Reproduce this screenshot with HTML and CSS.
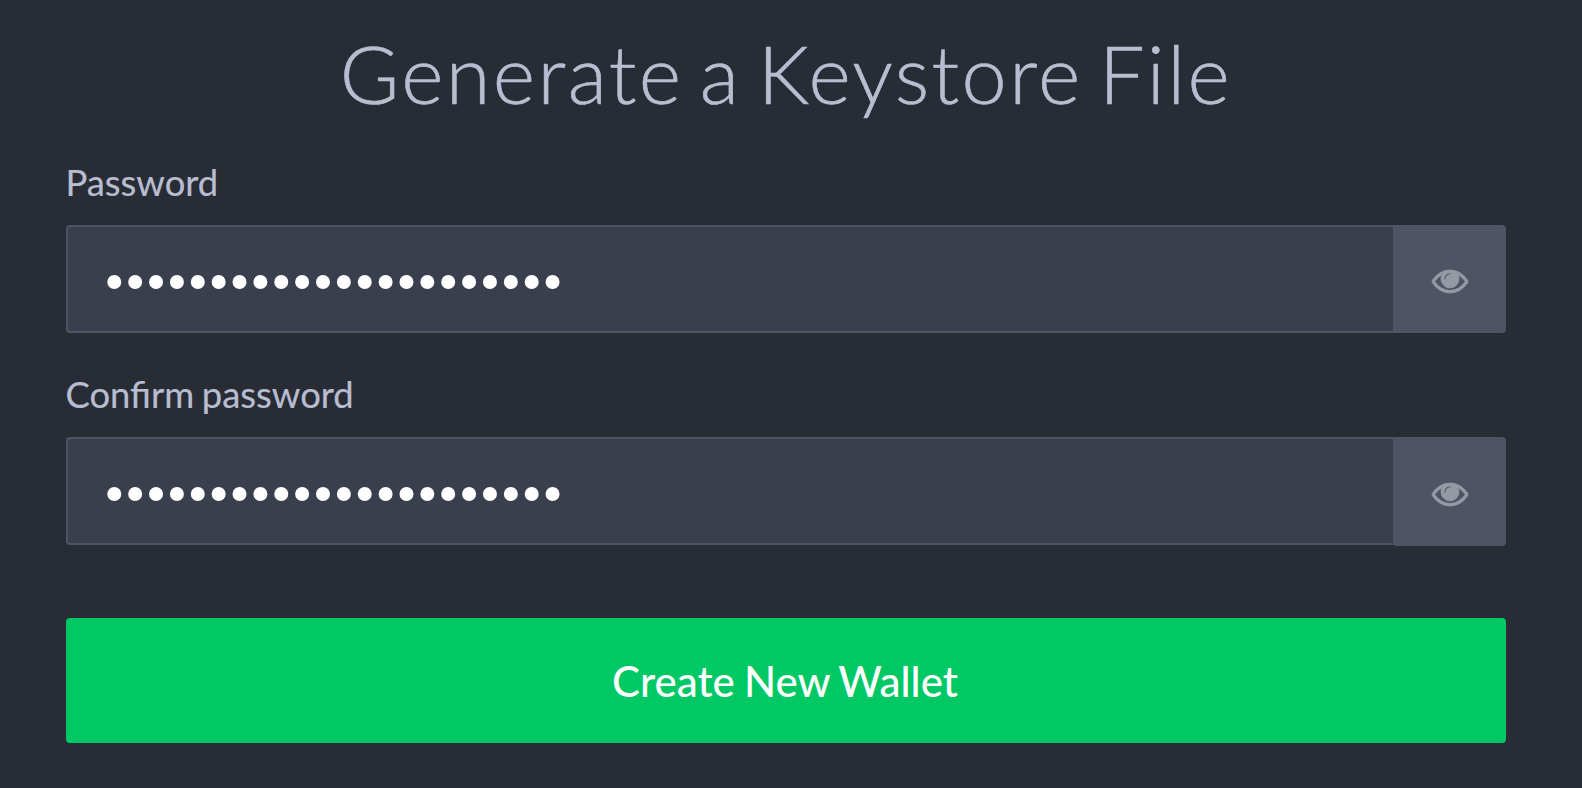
FILE: index.html
```
<!DOCTYPE html>
<html lang="en">
<head>
<meta charset="utf-8">
<title>Generate a Keystore File</title>
<link rel="stylesheet" href="styles.css">
</head>
<body>
<main class="panel">
  <h1 class="title">Generate a Keystore File</h1>
  <form class="form">
    <div class="field">
      <label class="label" for="pw">Password</label>
      <div class="group">
        <div class="input" id="pw"><svg class="dots" width="456" height="16" viewBox="0 0 456 16"><path d="M7.300 8H450"/></svg></div>
        <button type="button" class="toggle" aria-label="Show password"><svg class="eye" viewBox="0 0 1792 1152"><path d="M1664 576q-152-236-381-353 61 104 61 225 0 185-131.500 316.500t-316.500 131.500-316.500-131.500-131.500-316.500q0-121 61-225-229 117-381 353 133 205 333.500 326.500t434.500 121.500 434.500-121.500 333.500-326.500zm-720-384q0-20-14-34t-34-14q-125 0-214.500 89.500t-89.500 214.500q0 20 14 34t34 14 34-14 14-34q0-86 61-147t147-61q20 0 34-14t14-34zm848 384q0 34-20 69-140 230-376.500 368.500t-499.500 138.500-499.500-139-376.500-368q-20-35-20-69t20-69q140-229 376.500-368t499.500-139 499.500 139 376.500 368q20 35 20 69z"/></svg></button>
      </div>
    </div>
    <div class="field">
      <label class="label" for="pw2">Confirm password</label>
      <div class="group">
        <div class="input" id="pw2"><svg class="dots" width="456" height="16" viewBox="0 0 456 16"><path d="M7.300 8H450"/></svg></div>
        <button type="button" class="toggle toggle-tall" aria-label="Show password"><svg class="eye" viewBox="0 0 1792 1152"><path d="M1664 576q-152-236-381-353 61 104 61 225 0 185-131.500 316.500t-316.500 131.500-316.500-131.500-131.500-316.500q0-121 61-225-229 117-381 353 133 205 333.500 326.500t434.500 121.500 434.500-121.500 333.500-326.500zm-720-384q0-20-14-34t-34-14q-125 0-214.500 89.500t-89.500 214.500q0 20 14 34t34 14 34-14 14-34q0-86 61-147t147-61q20 0 34-14t14-34zm848 384q0 34-20 69-140 230-376.500 368.500t-499.500 138.500-499.500-139-376.500-368q-20-35-20-69t20-69q140-229 376.500-368t499.500-139 499.500 139 376.500 368q20 35 20 69z"/></svg></button>
      </div>
    </div>
    <button type="button" class="submit">Create New Wallet</button>
  </form>
</main>
</body>
</html>
```
FILE: styles.css
```
* { box-sizing: border-box; }
body { margin: 0; background: #282c35; font-family: Lato, sans-serif; color: #b8bdd1; }
.panel { height: 788px; padding: 21px 76px 0 66px; overflow: hidden; }
.title { margin: 0; height: 137px; line-height: 104px; font-size: 81px; font-weight: 300; text-align: center; white-space: nowrap; letter-spacing: 2.4px; word-spacing: -8px; -webkit-text-stroke: 0.6px #b8bdd1; }
.field { height: 212px; }
.label { display: block; height: 67px; margin-left: -0.5px; line-height: 49px; font-size: 36.400px; word-spacing: -1.6px; -webkit-text-stroke: 0.2px #b8bdd1; }
.group { display: flex; align-items: flex-start; height: 108px; }
.input { flex: 1; height: 108px; display: flex; align-items: center; padding: 6px 0 0 39px; background: #3a3f4d; border: 2px solid #4e5463; border-right: 0; border-radius: 4px 0 0 4px; }
.dots path { fill: none; stroke: #fff; stroke-width: 14; stroke-linecap: round; stroke-dasharray: 0 20.87; }
.toggle { width: 113px; height: 108px; border: 0; padding: 5px 0 0; background: #4e5463; border-radius: 0 4px 4px 0; display: flex; align-items: center; justify-content: center; }
.toggle-tall { height: 109px; padding-top: 6px; border-bottom-left-radius: 3px; }
.eye { width: 36px; height: 23px; fill: #9599a3; stroke: #9599a3; stroke-width: 46; overflow: visible; }
.submit { display: block; width: 100%; height: 125px; margin-top: 36px; border: 0; border-radius: 4px; background: #00c865; color: #fff; font: 500 42px Lato, sans-serif; word-spacing: -1.5px; padding: 0 2px 0 0; }
```
